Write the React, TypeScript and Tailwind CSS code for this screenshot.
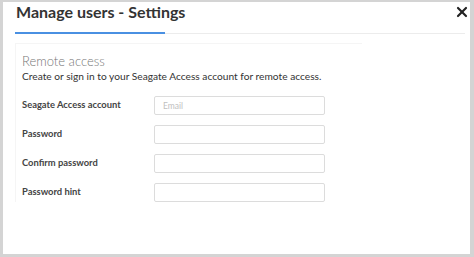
import { X } from "lucide-react";

const ROWS = [
  { label: "Seagate Access account", placeholder: "Email" },
  { label: "Password", placeholder: "" },
  { label: "Confirm password", placeholder: "" },
  { label: "Password hint", placeholder: "" },
];

export default function App() {
  return (
    <div className="h-[257px] w-[474px] bg-[#d4d4d4] pl-[3px] pr-[4px] pt-[2px] pb-[3px] font-['Lato','Open_Sans',sans-serif]">
      <div className="relative h-full w-full bg-white">
        {/* header */}
        <div className="px-[13px]">
          <div className="text-[16px] font-bold leading-[20px] text-[#333]">
            Manage users - Settings
          </div>
        </div>
        <X
          className="absolute right-0 top-[2px] h-[16px] w-[16px] text-[#222]"
          strokeWidth={3.2}
          aria-hidden="true"
        />
        <div className="mt-[10px] flex pl-[12px] pr-[5px]">
          <div className="h-[2px] w-[150px] bg-[#4a90e2]" />
          <div className="mt-[1px] h-px flex-1 bg-[#ececec]" />
        </div>

        {/* body */}
        <div className="ml-[12px] mr-[108px] mt-[9px] border-l border-t border-[#f5f5f5] pl-[6px] pt-[9px]">
          <div className="text-[13px] font-light leading-[16px] text-[#777]">
            Remote access
          </div>
          <div className="text-[10.2px] leading-[14px] text-[#333]">
            Create or sign in to your Seagate Access account for remote access.
          </div>

          <div className="mt-[13px] flex flex-col gap-[10px]">
            {ROWS.map((row) => (
              <div key={row.label} className="flex items-center">
                <div className="w-[132px] text-[9.4px] font-bold text-[#444]">
                  {row.label}
                </div>
                <input
                  type="text"
                  placeholder={row.placeholder}
                  className="h-[19px] w-[171px] rounded-[2px] border border-[#dcdcdc] px-[8px] text-[8.5px] text-[#333] outline-none placeholder:text-[#c0c0c0]"
                />
              </div>
            ))}
          </div>
        </div>
      </div>
    </div>
  );
}
